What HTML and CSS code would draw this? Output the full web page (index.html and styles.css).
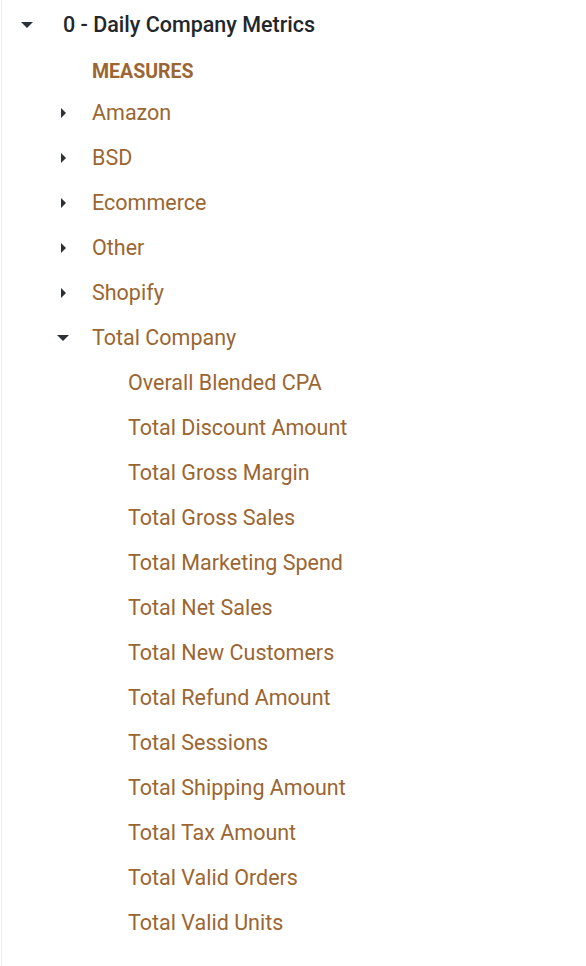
FILE: index.html
```html
<!DOCTYPE html>
<html>
<head>
<meta charset="utf-8">
<link rel="stylesheet" href="styles.css">
</head>
<body>
<div class="panel">
  <div class="row level0">
    <span class="slot"><span class="caret-down"></span></span>
    <span class="label title">0 - Daily Company Metrics</span>
  </div>
  <div class="section">MEASURES</div>
  <div class="row level1"><span class="slot"><span class="caret-right"></span></span><span class="label">Amazon</span></div>
  <div class="row level1"><span class="slot"><span class="caret-right"></span></span><span class="label">BSD</span></div>
  <div class="row level1"><span class="slot"><span class="caret-right"></span></span><span class="label">Ecommerce</span></div>
  <div class="row level1"><span class="slot"><span class="caret-right"></span></span><span class="label">Other</span></div>
  <div class="row level1"><span class="slot"><span class="caret-right"></span></span><span class="label">Shopify</span></div>
  <div class="row level1"><span class="slot"><span class="caret-down"></span></span><span class="label">Total Company</span></div>
  <div class="row level2"><span class="label">Overall Blended CPA</span></div>
  <div class="row level2"><span class="label">Total Discount Amount</span></div>
  <div class="row level2"><span class="label">Total Gross Margin</span></div>
  <div class="row level2"><span class="label">Total Gross Sales</span></div>
  <div class="row level2"><span class="label">Total Marketing Spend</span></div>
  <div class="row level2"><span class="label">Total Net Sales</span></div>
  <div class="row level2"><span class="label">Total New Customers</span></div>
  <div class="row level2"><span class="label">Total Refund Amount</span></div>
  <div class="row level2"><span class="label">Total Sessions</span></div>
  <div class="row level2"><span class="label">Total Shipping Amount</span></div>
  <div class="row level2"><span class="label">Total Tax Amount</span></div>
  <div class="row level2"><span class="label">Total Valid Orders</span></div>
  <div class="row level2"><span class="label">Total Valid Units</span></div>
</div>
</body>
</html>
```
FILE: styles.css
```css
html, body {
  margin: 0;
  padding: 0;
  background: #ffffff;
}
body {
  font-family: Roboto, "Liberation Sans", sans-serif;
  color: #9b6631;
}
.panel {
  margin-left: 1px;
  border-left: 1px solid #ededed;
  min-height: 966px;
  box-sizing: border-box;
}
.row {
  display: flex;
  align-items: center;
  height: 45px;
  font-size: 21.5px;
  line-height: 1;
  box-sizing: border-box;
}
.level0 {
  height: 48px;
  padding-left: 15px;
  padding-top: 2px;
}
.level0 .label {
  margin-left: 26px;
}
.title {
  color: #23272b;
  font-weight: 500;
}
.level1 {
  padding-left: 51px;
}
.level1 .label {
  margin-left: 19px;
}
.level2 {
  padding-left: 126px;
}
.slot {
  width: 20px;
  height: 20px;
  display: flex;
  align-items: center;
  justify-content: center;
}
.caret-down {
  width: 0;
  height: 0;
  border-left: 6px solid transparent;
  border-right: 6px solid transparent;
  border-top: 6px solid #2c3136;
}
.caret-right {
  width: 0;
  height: 0;
  border-top: 5px solid transparent;
  border-bottom: 5px solid transparent;
  border-left: 5.5px solid #2c3136;
}
.section {
  padding-left: 90px;
  padding-top: 5px;
  height: 42px;
  line-height: 37px;
  font-size: 19.5px;
  font-weight: 700;
  box-sizing: border-box;
}
```
